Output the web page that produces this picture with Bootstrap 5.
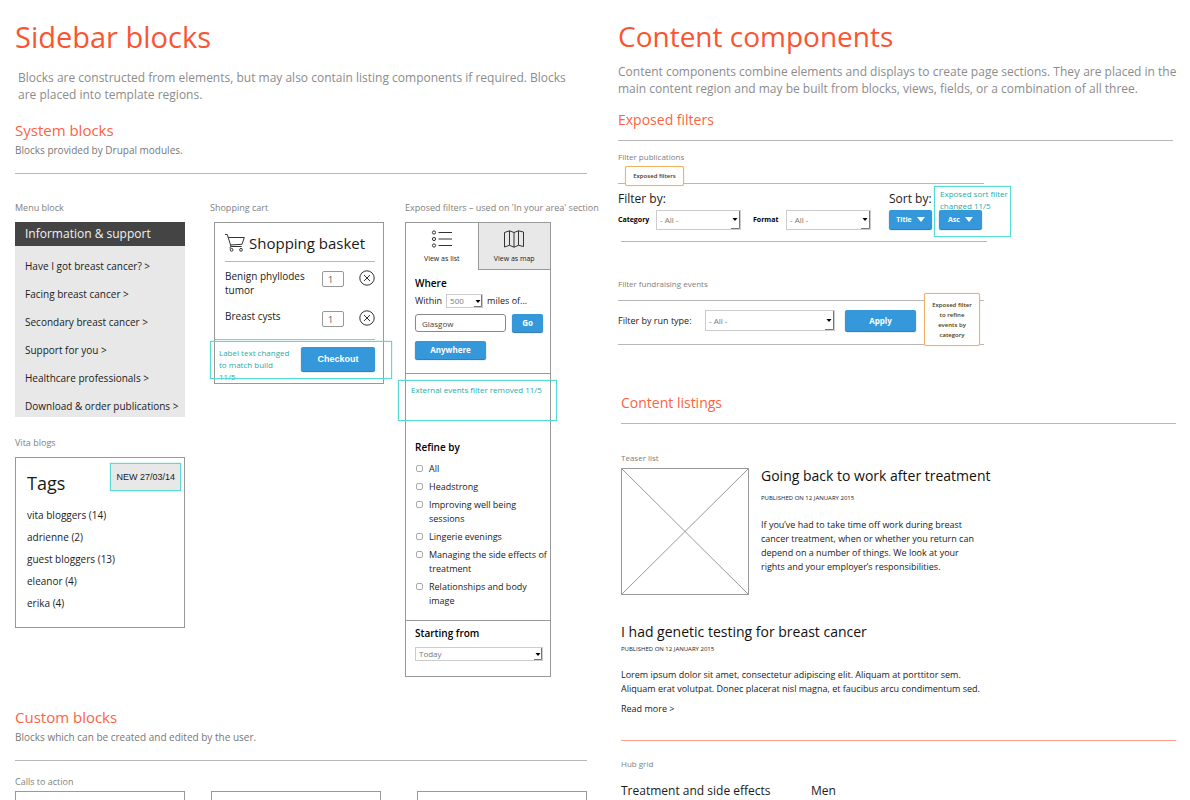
<!doctype html>
<html lang="en">
<head>
<meta charset="utf-8">
<meta name="viewport" content="width=device-width, initial-scale=1">
<title>Sidebar blocks and content components</title>
<link href="https://cdn.jsdelivr.net/npm/bootstrap@5.3.0/dist/css/bootstrap.min.css" rel="stylesheet">
<style>
:root{--coral:#fa5532;--coral-soft:#fc6344;--line:#b8b8b8;--frame:#999;--teal:#1fada8;--aqua:#55dcd6}
body{font-family:"Open Sans","Noto Sans",sans-serif;font-size:10px;line-height:14px;color:#1a1a1a;background:#fff}
h1,h2,h3,h4,p,ul{margin:0;font-weight:400;line-height:inherit}
ul{padding:0;list-style:none}
a{color:inherit;text-decoration:none}
a:hover{text-decoration:underline}
.left-side{padding:17px 8px 0 15px}
.right-side{padding:16px 17px 0 23px}
.page-title{font-size:29px;line-height:40px;color:var(--coral)}
.right-side .page-title{font-size:28px}
.intro{font-size:12px;line-height:17px;color:#8c8c8c}
.left-side .intro{margin:12px 0 17px 3px}
.right-side .intro{margin:7px -10px 13px 0}
.section-title{font-size:15px;line-height:20px;color:var(--coral-soft)}
.right-side .section-title{font-size:14px}
.section-note{color:#777;margin:3px 0 16px}
.rule{border-top:1px solid var(--line)}
.caption-label{font-size:8px;line-height:12px;color:#808080}
.left-side .caption-label{font-size:9px;white-space:nowrap}
.frame{border:1px solid var(--frame)}
.note-box{position:absolute;border:1px solid var(--aqua);box-shadow:0 0 1px var(--aqua);pointer-events:none}
.note-text{font-size:8px;line-height:12px;color:var(--teal)}
.btn-blue{--bs-btn-padding-x:0;--bs-btn-padding-y:0;--bs-btn-font-size:8px;--bs-btn-font-weight:700;--bs-btn-color:#fff;--bs-btn-bg:#3498db;--bs-btn-border-width:0;--bs-btn-border-radius:2px;--bs-btn-hover-color:#fff;--bs-btn-hover-bg:#2b88c6;--bs-btn-line-height:12px;box-shadow:0 1px 1px #2471a3}
.pick{height:14px;padding:0 14px 0 3px;border:1px solid #ccc;border-radius:0;font-size:8px;line-height:12px;color:#777;
 background:#fff url("data:image/svg+xml,%3Csvg xmlns='http://www.w3.org/2000/svg' width='10' height='20'%3E%3Cpath d='M1 19.5H9.5V0' fill='none' stroke='%23777'/%3E%3Cpath d='M2.5 9h5L5 12z' fill='%23000'/%3E%3C/svg%3E") right bottom/10px 20px no-repeat}
.pick-short{background-image:url("data:image/svg+xml,%3Csvg xmlns='http://www.w3.org/2000/svg' width='10' height='14'%3E%3Cpath d='M1 12.5H8.5V0' fill='none' stroke='%23777'/%3E%3Cpath d='M2.5 6h5L5 9z' fill='%23000'/%3E%3C/svg%3E");background-size:10px 14px;background-position:right -1px bottom -1px}

.blocks{display:grid;grid-template-columns:minmax(0,174fr) minmax(0,174fr) minmax(0,182fr);column-gap:21px;margin-top:28px}
.menu-head{background:#444;color:#f2f2f2;font-size:12px;line-height:24px;padding-left:10px}
.menu-list{background:#e8e8e8;padding:13px 0 4px 10px;display:grid;gap:14px;white-space:nowrap}
.tags-box{padding:13px 11px 17px}
.tags-title{font-size:18px;line-height:24px;margin-bottom:13px}
.tags-list{display:grid;gap:8px}
.new-badge{position:absolute;top:5px;right:3px;background:#e8e8e8;border:1px solid var(--aqua);box-shadow:0 0 1px var(--aqua);padding:6px 5px;font:9px/14px "Liberation Sans",sans-serif}

.basket{margin-left:4px}
.basket-title{font-size:15px;line-height:24px;white-space:nowrap}
.basket-head{margin:8px 8px 7px 10px;padding-bottom:6px;border-bottom:1px solid var(--line);gap:4px}
.basket-row{margin:0 8px 12px 10px}
.qty{width:22px;height:16px;padding:0 0 0 5px;border:1px solid #999;border-radius:2px;color:#555;font-size:9px;line-height:12px;margin:2px 15px 0 auto}
.btn-remove{border:0;background:none;padding:0;width:16px;height:16px;margin-top:1px;display:flex}
.basket-foot{border-top:1px solid var(--line);margin:0 8px 0 0;padding:7px 0 0 4px}
.checkout{width:74px;height:24px;font-family:"Liberation Sans",sans-serif;--bs-btn-font-size:9px}
.basket .note-box{top:118px;left:-5px;right:-9px;height:38px}

.area-filter{margin-right:36px}
.view-tab{flex:1;height:47px;font-size:7px;line-height:12px;padding:7px 0 0;border:0;border-bottom:1px solid transparent;background:#fff;color:#1a1a1a;display:flex;flex-direction:column;align-items:center;gap:5px}
.view-tab.is-off{background:#e8e8e8;border-left:1px solid var(--frame);border-bottom:1px solid var(--frame)}
.area-part{padding-left:9px;padding-right:7px}
.area-part+.area-part{border-top:1px solid var(--frame)}
.area-title{font-size:10px;font-weight:600;color:#000}
.small-line{font-size:9px}
.town{flex:1;min-width:0;height:18px;border:1px solid #888;border-radius:3px;padding:0 6px;font-size:8px;line-height:14px;color:#444}
.checks{display:grid;gap:4px;margin-top:8px;font-size:9px;white-space:nowrap}
.checks li{display:flex;gap:6px}
.checks .form-check-input{width:7px;height:7px;border:1px solid #aaa;border-radius:2px;margin:3px 0 0 1px;flex:none}
.area-filter .note-box{top:157px;left:-8px;right:-7px;height:41px;padding:3px 0 0 12px;white-space:nowrap}
.cta{flex:1;border-bottom:0}

.filters{max-width:366px}
.tip{position:absolute;background:#fff;border:1px solid #eeb462;border-radius:2px;box-shadow:0 0 1px #eeb462;font-size:6px;font-weight:600;color:#4a3a14;text-align:center}
.group-title{font-size:12px;line-height:18px}
.tiny-label{font-size:7px;font-weight:700;color:#000}
.pick-tall{height:20px;width:85px}
.sort-btn{width:43px;height:19px;--bs-btn-font-size:7px;display:flex;align-items:center;justify-content:center;gap:5px}
.placeholder-img{width:128px;height:127px;flex:none;display:block}
.teaser-title{font-size:14px;line-height:20px;color:#111}
.published{font-size:6px;line-height:10px;color:#222}
.body-copy{font-size:9px;line-height:14px}
</style>
</head>
<body>
<div class="row g-0 min-vh-100">
<main class="col-6 left-side d-flex flex-column">
  <h1 class="page-title">Sidebar blocks</h1>
  <p class="intro">Blocks are constructed from elements, but may also contain listing components if required. Blocks<br>are placed into template regions.</p>
  <h2 class="section-title">System blocks</h2>
  <p class="section-note">Blocks provided by Drupal modules.</p>
  <div class="rule"></div>

  <div class="blocks">
    <div class="pe-1">
      <h3 class="caption-label mb-2">Menu block</h3>
      <nav>
        <div class="menu-head">Information &amp; support</div>
        <ul class="menu-list">
          <li><a href="#">Have I got breast cancer? &gt;</a></li>
          <li><a href="#">Facing breast cancer &gt;</a></li>
          <li><a href="#">Secondary breast cancer &gt;</a></li>
          <li><a href="#">Support for you &gt;</a></li>
          <li><a href="#">Healthcare professionals &gt;</a></li>
          <li><a href="#">Download &amp; order publications &gt;</a></li>
        </ul>
      </nav>
      <h3 class="caption-label mb-2" style="margin-top:20px">Vita blogs</h3>
      <section class="frame tags-box position-relative">
        <h4 class="tags-title">Tags</h4>
        <span class="new-badge">NEW 27/03/14</span>
        <ul class="tags-list">
          <li><a href="#">vita bloggers (14)</a></li>
          <li><a href="#">adrienne (2)</a></li>
          <li><a href="#">guest bloggers (13)</a></li>
          <li><a href="#">eleanor (4)</a></li>
          <li><a href="#">erika (4)</a></li>
        </ul>
      </section>
    </div>

    <div>
      <h3 class="caption-label mb-2">Shopping cart</h3>
      <section class="frame basket position-relative">
        <div class="basket-head d-flex align-items-center">
          <svg class="flex-shrink-0" width="20" height="18" viewBox="0 0 20 18" fill="none" stroke="#333" stroke-width="1"><path d="M0 .5h2.3L6 12.5h10.7M3.3 3.5h16l-2.3 6.8-11.6.7M6 12.5q-1.6.5-.8 2"/><circle cx="6.6" cy="15.8" r="1.4"/><circle cx="16" cy="15.8" r="1.4"/></svg>
          <h4 class="basket-title">Shopping basket</h4>
        </div>
        <div class="basket-row d-flex align-items-start">
          <label for="q1">Benign phyllodes<br>tumor</label>
          <input class="qty" id="q1" type="text" value="1">
          <button class="btn-remove" type="button" aria-label="Remove Benign phyllodes tumor"><svg width="16" height="16" viewBox="0 0 16 16" fill="none" stroke="#333"><circle cx="8" cy="8" r="7.2"/><path d="M5 5l6 6M11 5l-6 6"/></svg></button>
        </div>
        <div class="basket-row d-flex align-items-start">
          <label for="q2">Breast cysts</label>
          <input class="qty" id="q2" type="text" value="1">
          <button class="btn-remove" type="button" aria-label="Remove Breast cysts"><svg width="16" height="16" viewBox="0 0 16 16" fill="none" stroke="#333"><circle cx="8" cy="8" r="7.2"/><path d="M5 5l6 6M11 5l-6 6"/></svg></button>
        </div>
        <div class="basket-foot d-flex justify-content-between align-items-start">
          <p class="note-text">Label text changed<br>to match build<br>11/5</p>
          <button class="btn btn-blue checkout" type="button">Checkout</button>
        </div>
        <div class="note-box"></div>
      </section>
    </div>

    <div>
      <h3 class="caption-label mb-2">Exposed filters – used on 'In your area' section</h3>
      <form class="frame area-filter position-relative">
        <div class="d-flex">
          <button class="view-tab" type="button"><svg width="22" height="18" viewBox="0 0 22 18" fill="none" stroke="#333"><circle cx="3" cy="2.5" r="1.6"/><circle cx="3" cy="9" r="1.6"/><circle cx="3" cy="15.5" r="1.6"/><path d="M7.5 2.5H21M7.5 9H21M7.5 15.5H21"/></svg>View as list</button>
          <button class="view-tab is-off" type="button"><svg width="22" height="18" viewBox="0 0 22 18" fill="none" stroke="#333"><path d="M1.5 2.5L6.5 .8l4.5 1.7L15.500 .8l5 1.200V16.500l-5-1.200L11 17.200l-4.500-1.900-5 1.700zM6.500 .8v14.500M11 2.500v14.700M15.500 .8v14.500"/></svg>View as map</button>
        </div>
        <div class="area-part" style="padding-top:6px;padding-bottom:14px">
          <h4 class="area-title">Where</h4>
          <div class="d-flex align-items-center small-line" style="gap:4px;margin-top:3px;height:16px">
            <label for="within">Within</label>
            <select id="within" class="form-select pick pick-short" style="width:37px"><option>500</option></select>
            <span>miles of...</span>
          </div>
          <div class="d-flex" style="gap:6px;margin-top:5px">
            <input class="town" type="text" value="Glasgow" aria-label="Town">
            <button class="btn btn-blue" type="button" style="width:31px;height:18px">Go</button>
          </div>
          <button class="btn btn-blue d-block" type="button" style="width:71px;height:18px;margin-top:9px">Anywhere</button>
        </div>
        <div class="area-part" style="padding-top:66px;padding-bottom:12px">
          <h4 class="area-title">Refine by</h4>
          <ul class="checks">
            <li><input class="form-check-input" type="checkbox" id="c1"><label for="c1">All</label></li>
            <li><input class="form-check-input" type="checkbox" id="c2"><label for="c2">Headstrong</label></li>
            <li><input class="form-check-input" type="checkbox" id="c3"><label for="c3">Improving well being<br>sessions</label></li>
            <li><input class="form-check-input" type="checkbox" id="c4"><label for="c4">Lingerie evenings</label></li>
            <li><input class="form-check-input" type="checkbox" id="c5"><label for="c5">Managing the side effects of<br>treatment</label></li>
            <li><input class="form-check-input" type="checkbox" id="c6"><label for="c6">Relationships and body<br>image</label></li>
          </ul>
        </div>
        <div class="area-part" style="padding-top:5px;padding-bottom:15px">
          <label class="area-title d-block" for="start">Starting from</label>
          <select id="start" class="form-select pick pick-short" style="margin-top:7px"><option>Today</option></select>
        </div>
        <div class="note-box note-text">External events filter removed 11/5</div>
      </form>
    </div>
  </div>

  <h2 class="section-title" style="margin-top:30px">Custom blocks</h2>
  <p class="section-note">Blocks which can be created and edited by the user.</p>
  <div class="rule"></div>
  <h3 class="caption-label" style="margin:15px 0 3px">Calls to action</h3>
  <div class="d-flex flex-fill" style="gap:26px">
    <div class="frame cta"></div>
    <div class="frame cta" style="margin-right:10px"></div>
    <div class="frame cta"></div>
  </div>
</main>

<section class="col-6 right-side">
  <h1 class="page-title">Content components</h1>
  <p class="intro">Content components combine elements and displays to create page sections. They are placed in the<br>main content region and may be built from blocks, views, fields, or a combination of all three.</p>
  <h2 class="section-title">Exposed filters</h2>
  <div class="rule" style="margin:10px 0"></div>

  <h3 class="caption-label">Filter publications</h3>
  <div class="filters rule position-relative" style="margin-top:20px;padding-top:6px">
    <span class="tip" style="top:-18px;left:7px;width:59px;line-height:18px">Exposed filters</span>
    <div class="d-flex justify-content-between">
      <div>
        <h4 class="group-title">Filter by:</h4>
        <div class="d-flex align-items-center" style="margin-top:2px">
          <label class="tiny-label" for="cat" style="width:38px">Category</label>
          <select id="cat" class="form-select pick pick-tall"><option>- All -</option></select>
          <label class="tiny-label" for="fmt" style="width:33px;margin-left:12px">Format</label>
          <select id="fmt" class="form-select pick pick-tall"><option>- All -</option></select>
        </div>
      </div>
      <div>
        <h4 class="group-title">Sort by:</h4>
        <div class="d-flex" style="gap:7px;margin:2px 2px 0 0">
          <button class="btn btn-blue sort-btn" type="button">Title <svg width="8" height="5" viewBox="0 0 8 5"><path d="M0 0h8L4 5z" fill="#fff"/></svg></button>
          <button class="btn btn-blue sort-btn" type="button">Asc <svg width="8" height="5" viewBox="0 0 8 5"><path d="M0 0h8L4 5z" fill="#fff"/></svg></button>
        </div>
      </div>
    </div>
    <div class="note-box note-text" style="top:2px;right:-27px;width:77px;height:51px;padding:1px 0 0 5px;line-height:12px">Exposed sort filter<br>changed 11/5</div>
  </div>
  <div class="filters rule" style="margin-top:11px;margin-left:3px"></div>

  <h3 class="caption-label" style="margin:36px 0 10px">Filter fundraising events</h3>
  <div class="filters rule position-relative" style="padding:9px 0 13px">
    <div class="d-flex align-items-center" style="padding-right:68px">
      <label for="run" class="small-line" style="width:87px;flex:none">Filter by run type:</label>
      <select id="run" class="form-select pick" style="height:21px;flex:1"><option>- All -</option></select>
      <button class="btn btn-blue" type="button" style="width:71px;height:21px;margin-left:10px">Apply</button>
    </div>
    <span class="tip" style="top:-8px;right:4px;width:56px;height:53px;padding:6px 0;line-height:10px">Exposed filter<br>to refine<br>events by<br>category</span>
  </div>
  <div class="filters rule"></div>

  <div style="margin:48px -3px 0 3px">
    <h2 class="section-title">Content listings</h2>
    <div class="rule" style="margin:10px 0 28px"></div>
    <h3 class="caption-label" style="margin-bottom:4px">Teaser list</h3>
    <article class="d-flex" style="gap:12px">
      <svg class="placeholder-img" viewBox="0 0 128 127" fill="none" stroke="#999" role="img" aria-label="Image placeholder"><path d="M.5 .5h127v126H.5zM.5 .5l127 126M127.5 .5L.5 126.5"/></svg>
      <div>
        <h4 class="teaser-title" style="margin-top:-2px">Going back to work after treatment</h4>
        <p class="published" style="margin:7px 0 15px">PUBLISHED ON 12 JANUARY 2015</p>
        <p class="body-copy">If you’ve had to take time off work during breast<br>cancer treatment, when or whether you return can<br>depend on a number of things. We look at your<br>rights and your employer’s responsibilities.</p>
      </div>
    </article>
    <article style="margin-top:27px">
      <h4 class="teaser-title">I had genetic testing for breast cancer</h4>
      <p class="published" style="margin:2px 0 14px">PUBLISHED ON 12 JANUARY 2015</p>
      <p class="body-copy">Lorem ipsum dolor sit amet, consectetur adipiscing elit. Aliquam at porttitor sem.<br>Aliquam erat volutpat. Donec placerat nisl magna, et faucibus arcu condimentum sed.</p>
      <a class="body-copy d-inline-block" href="#" style="margin-top:6px">Read more &gt;</a>
    </article>
    <div style="border-top:1px solid #ff9f8c;margin:24px 0 17px"></div>
    <h3 class="caption-label" style="margin-bottom:12px">Hub grid</h3>
    <div class="d-flex group-title"><a href="#" style="width:190px">Treatment and side effects</a><a href="#">Men</a></div>
  </div>
</section>
</div>
<script src="https://cdn.jsdelivr.net/npm/bootstrap@5.3.0/dist/js/bootstrap.bundle.min.js"></script>
</body>
</html>
